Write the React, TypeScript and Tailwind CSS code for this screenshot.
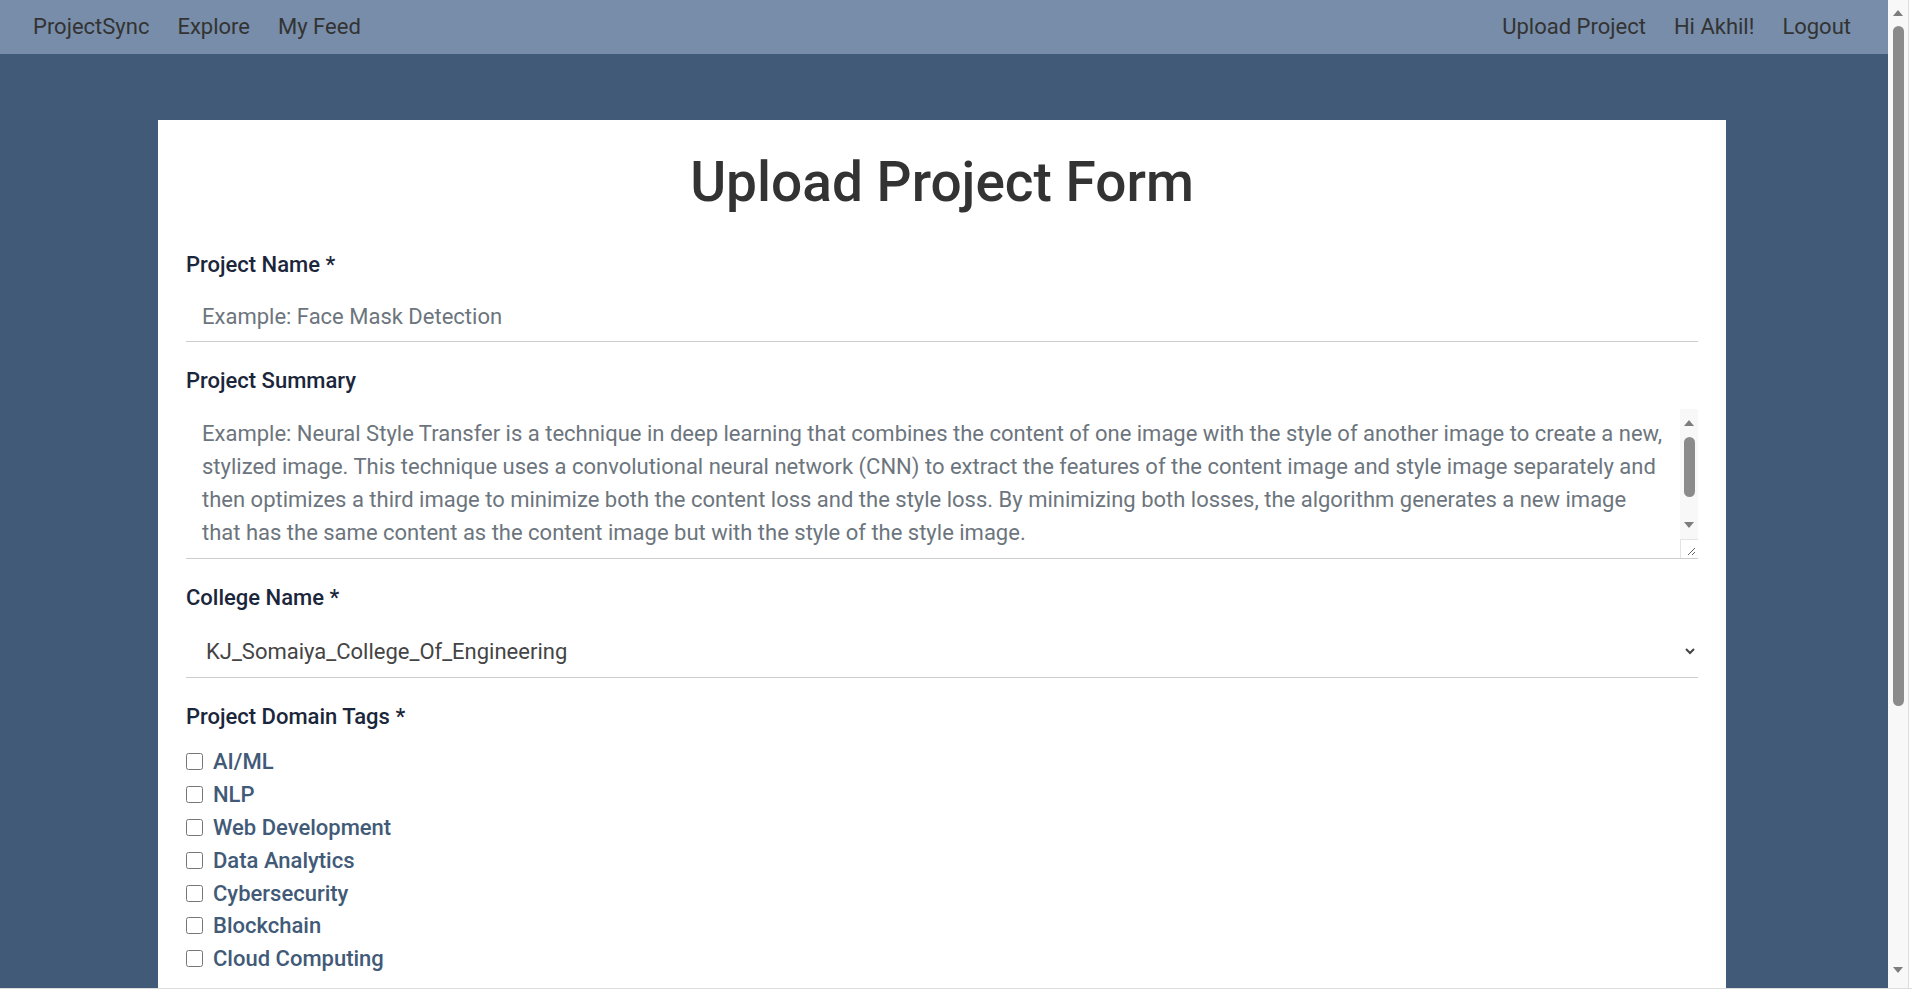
import { useState } from 'react';

const domainTags = ['AI/ML', 'NLP', 'Web Development', 'Data Analytics', 'Cybersecurity', 'Blockchain', 'Cloud Computing'];

const summaryPlaceholder =
  'Example: Neural Style Transfer is a technique in deep learning that combines the content of one image with the style of another image to create a new, stylized image. This technique uses a convolutional neural network (CNN) to extract the features of the content image and style image separately and then optimizes a third image to minimize both the content loss and the style loss. By minimizing both losses, the algorithm generates a new image that has the same content as the content image but with the style of the style image.';

function ArrowUp() {
  return (
    <svg width="10" height="6" viewBox="0 0 10 6" aria-hidden="true">
      <path d="M0 6 L5 0 L10 6 Z" fill="#7d7d7d" />
    </svg>
  );
}

function ArrowDown() {
  return (
    <svg width="10" height="6" viewBox="0 0 10 6" aria-hidden="true">
      <path d="M0 0 L10 0 L5 6 Z" fill="#7d7d7d" />
    </svg>
  );
}

export default function App() {
  const [tags, setTags] = useState<string[]>([]);

  const toggleTag = (tag: string) =>
    setTags(prev => (prev.includes(tag) ? prev.filter(t => t !== tag) : [...prev, tag]));

  return (
    <div className="min-h-screen bg-white font-['Roboto','Liberation_Sans',sans-serif]">
      <div className="mr-[24px] bg-[#415a77] min-h-screen">
        {/* ── NAVBAR ── */}
        <nav className="h-[54px] bg-[#778da9] flex items-center justify-between pl-[33px] pr-[37px] pb-[2px] text-[22px] text-[#333]">
          <div className="flex items-center gap-[28px]">
            <a href="#">ProjectSync</a>
            <a href="#">Explore</a>
            <a href="#">My Feed</a>
          </div>
          <div className="flex items-center gap-[28px]">
            <a href="#">Upload Project</a>
            <span>Hi Akhil!</span>
            <a href="#">Logout</a>
          </div>
        </nav>

        {/* ── FORM CARD ── */}
        <div className="pt-[66px] pb-[60px]">
          <form className="ml-[158px] w-[1568px] bg-white px-[28px] pt-[30px] pb-[300px]">
            <h1 className="text-center text-[55px] leading-[64px] font-medium text-[#333]">Upload Project Form</h1>

            <div className="mt-[37px]">
              <label className="block text-[22px] leading-[28px] font-medium text-[#1b263b]">Project Name *</label>
              <input
                type="text"
                placeholder="Example: Face Mask Detection"
                className="mt-[12px] block w-full h-[51px] px-4 text-[22px] text-[#333] border-b border-[#ccc] outline-none placeholder:text-[#6c757d]"
              />
            </div>

            <div className="mt-[25px]">
              <label className="block text-[22px] leading-[28px] font-medium text-[#1b263b]">Project Summary</label>
              <div className="relative mt-[14px]">
                <textarea
                  placeholder={summaryPlaceholder}
                  className="block w-full h-[150px] pt-[8px] pl-4 pr-[35px] text-[22px] leading-[33px] text-[#333] border-b border-[#ccc] outline-none overflow-hidden resize-none placeholder:text-[#6c757d]"
                />
                {/* textarea scrollbar */}
                <div className="absolute right-0 top-0 w-[18px] h-[130px] bg-[#f8f8f8] flex flex-col items-center">
                  <div className="h-[28px] flex items-center"><ArrowUp /></div>
                  <div className="w-[11px] h-[60px] rounded-full bg-[#8b8b8b]" />
                  <div className="flex-1" />
                  <div className="h-[28px] flex items-center"><ArrowDown /></div>
                </div>
                <div className="absolute right-0 top-[130px] w-[18px] h-[19px] bg-white border-l border-t border-[#e3e3e3] flex items-end justify-end p-[2px]">
                  <svg width="9" height="9" viewBox="0 0 9 9" aria-hidden="true">
                    <path d="M1 8 L8 1 M5 8 L8 5" stroke="#666" strokeWidth="1" />
                  </svg>
                </div>
              </div>
            </div>

            <div className="mt-[25px]">
              <label className="block text-[22px] leading-[28px] font-medium text-[#1b263b]">College Name *</label>
              <select
                defaultValue="KJ_Somaiya_College_Of_Engineering"
                className="mt-[13px] block w-full h-[53px] pl-4 pr-2 text-[22px] text-[#444] border-b border-[#ccc] outline-none"
              >
                <option>KJ_Somaiya_College_Of_Engineering</option>
                <option>VJTI</option>
                <option>SPIT</option>
              </select>
            </div>

            <div className="mt-[25px]">
              <label className="block text-[22px] leading-[28px] font-medium text-[#1b263b]">Project Domain Tags *</label>
              <div className="mt-[14px]">
                {domainTags.map(tag => (
                  <label key={tag} className="flex items-center gap-[10px] h-[32.9px]">
                    <input
                      type="checkbox"
                      checked={tags.includes(tag)}
                      onChange={() => toggleTag(tag)}
                      className="w-[17px] h-[17px] m-0"
                    />
                    <span className="text-[22px] font-medium text-[#415a77]">{tag}</span>
                  </label>
                ))}
              </div>
            </div>
          </form>
        </div>
      </div>

      {/* ── PAGE SCROLLBAR + WINDOW EDGE ── */}
      <div className="fixed right-0 top-0 bottom-0 w-[24px] flex">
        <div className="w-[20px] h-full bg-[#f8f8f8] flex flex-col items-center">
          <div className="h-[26px] flex items-center"><ArrowUp /></div>
          <div className="w-[11px] h-[680px] rounded-full bg-[#8b8b8b]" />
          <div className="flex-1" />
          <div className="h-[28px] flex items-start pt-[3px]"><ArrowDown /></div>
        </div>
        <div className="flex-1 bg-white border-l border-[#dcdcdc]" />
      </div>
      <div className="fixed left-0 right-0 bottom-0 h-[4px] bg-white border-t border-[#dcdcdc]" />
    </div>
  );
}
